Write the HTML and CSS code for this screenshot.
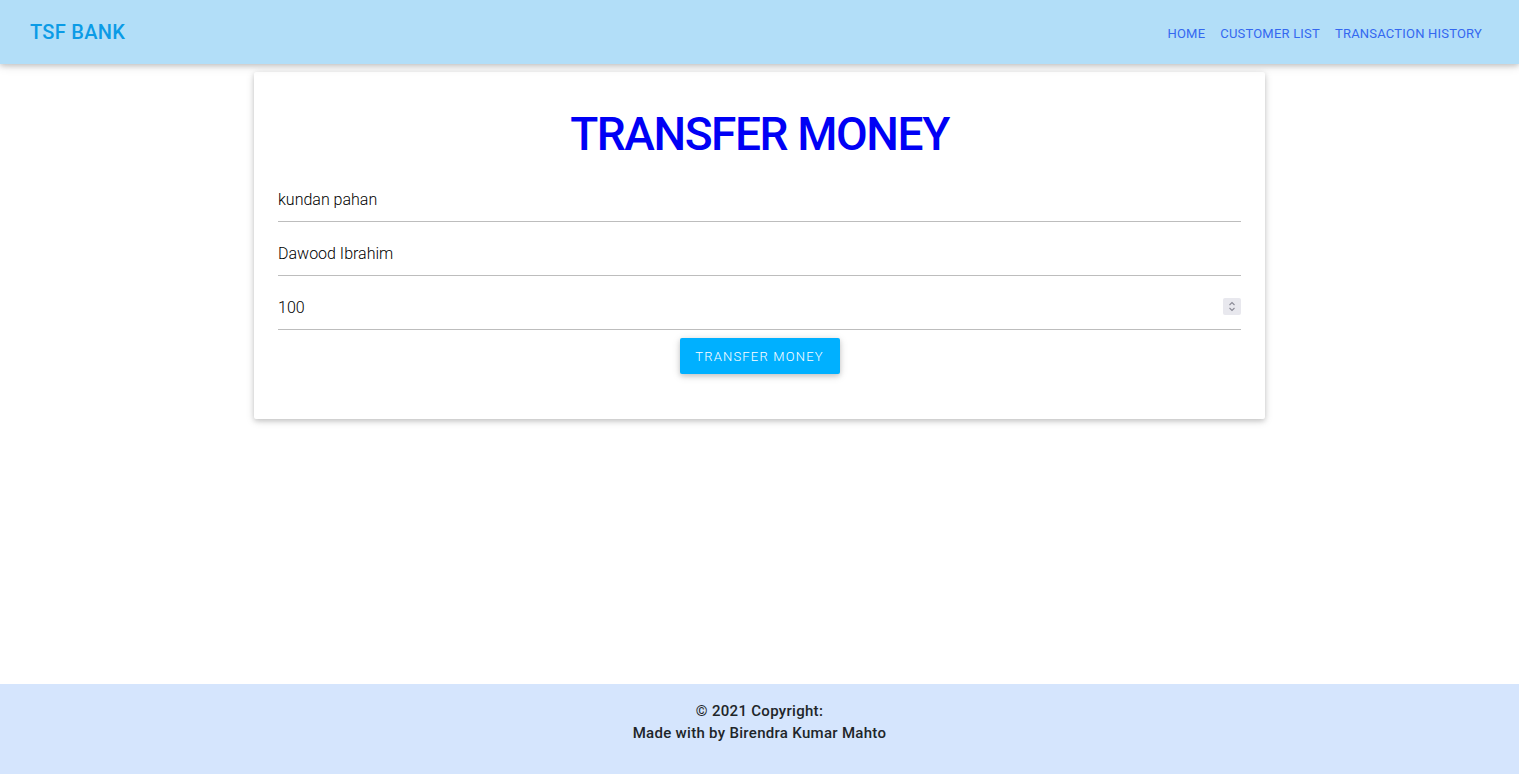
FILE: index.html
```html
<!DOCTYPE html>
<html lang="en">
<head>
<meta charset="utf-8">
<title>TSF Bank - Transfer Money</title>
<link rel="stylesheet" href="styles.css">
</head>
<body>
<header class="navbar">
  <a class="brand" href="#">TSF BANK</a>
  <nav class="nav-links">
    <a href="#">HOME</a>
    <a href="#">CUSTOMER LIST</a>
    <a href="#">TRANSACTION HISTORY</a>
  </nav>
</header>
<main class="main">
  <section class="card">
    <h1 class="title">TRANSFER MONEY</h1>
    <form class="form">
      <div class="field"><input class="input" type="text" value="kundan pahan"></div>
      <div class="field"><input class="input" type="text" value="Dawood Ibrahim"></div>
      <div class="field field-last">
        <input class="input" type="text" value="100">
        <span class="spinner">
          <svg width="18" height="17" viewBox="0 0 18 17"><path d="M6.5 7 L9 4.5 L11.5 7" fill="none" stroke="#8a8a96" stroke-width="1.1"/><path d="M6.5 10 L9 12.5 L11.5 10" fill="none" stroke="#8a8a96" stroke-width="1.1"/></svg>
        </span>
      </div>
      <div class="actions"><button class="btn" type="button">TRANSFER MONEY</button></div>
    </form>
  </section>
</main>
<footer class="footer">
  <div class="footer-line">© 2021 Copyright:</div>
  <div class="footer-line">Made with by Birendra Kumar Mahto</div>
</footer>
</body>
</html>
```
FILE: styles.css
```css
html, body { margin: 0; padding: 0; }
body {
  font-family: Roboto, "Liberation Sans", sans-serif;
  min-height: 100vh;
  display: flex;
  flex-direction: column;
  background: #fff;
}
.navbar {
  height: 64px;
  background: #b2def8;
  display: flex;
  align-items: center;
  justify-content: space-between;
  padding: 0 30px;
  box-shadow: 0 2px 5px 0 rgba(0,0,0,.16), 0 2px 10px 0 rgba(0,0,0,.12);
  position: relative;
  z-index: 2;
}
.brand {
  color: #0b9be6;
  font-size: 20px;
  text-decoration: none;
  font-weight: 500;
  letter-spacing: .3px;
}
.nav-links { display: flex; padding-top: 2px; }
.nav-links a {
  color: #3468f0;
  text-decoration: none;
  font-size: 13px;
  font-weight: 400;
  padding: 0 7.5px;
  letter-spacing: .2px;
}
.nav-links a:last-child { padding-right: 7px; }
.main { flex: 1; }
.card {
  width: 1011px;
  box-sizing: border-box;
  margin: 8px auto 0;
  padding: 37px 24px 45px;
  background: #fff;
  box-shadow: 0 2px 5px 0 rgba(0,0,0,.16), 0 2px 10px 0 rgba(0,0,0,.12);
  border-radius: 2px;
}
.title {
  margin: 0;
  text-align: center;
  color: #0000f5;
  font-size: 46px;
  line-height: 50px;
  font-weight: 500;
  letter-spacing: -1.4px;
}
.form { margin-top: 23px; }
.field { position: relative; margin-bottom: 14px; }
.field-last { margin-bottom: 0; }
.input {
  display: block;
  width: 100%;
  height: 40px;
  box-sizing: border-box;
  border: none;
  border-bottom: 1px solid #bdbdbd;
  padding: 0 0 4px;
  font-family: Roboto, "Liberation Sans", sans-serif;
  font-size: 16px;
  font-weight: 300;
  color: #000;
  background: transparent;
  outline: none;
}
.spinner {
  position: absolute;
  right: 0;
  top: 8px;
  width: 18px;
  height: 17px;
  background: #e8e8ee;
  border-radius: 2px;
  display: flex;
}
.actions { display: flex; justify-content: center; margin-top: 8px; }
.btn {
  height: 36px;
  width: 160px;
  padding: 0;
  border: none;
  border-radius: 2px;
  background: #00b0ff;
  color: #fff;
  font-family: Roboto, "Liberation Sans", sans-serif;
  font-size: 13px;
  font-weight: 300;
  letter-spacing: 1.2px;
  box-shadow: 0 2px 5px 0 rgba(0,0,0,.16), 0 2px 10px 0 rgba(0,0,0,.12);
}
.footer {
  height: 90px;
  box-sizing: border-box;
  background: #d5e5fd;
  padding-top: 16px;
  text-align: center;
  color: #212529;
  font-size: 15px;
  font-weight: 500;
  letter-spacing: .3px;
}
.footer-line { line-height: 22px; }
```
